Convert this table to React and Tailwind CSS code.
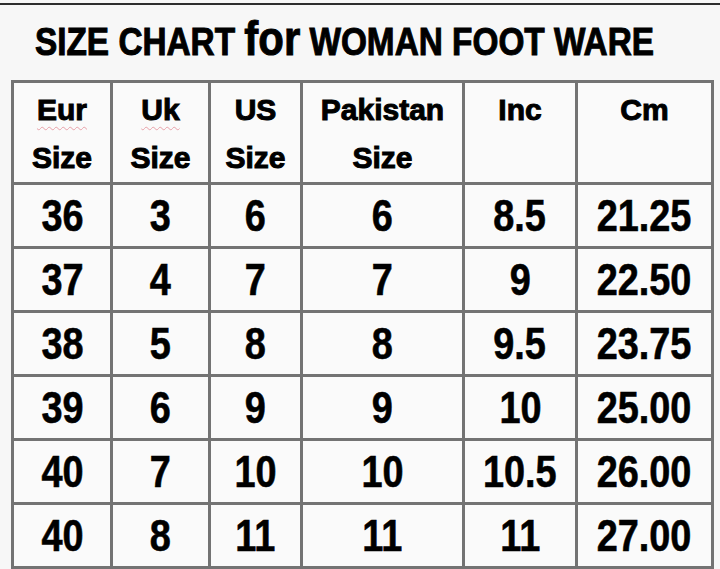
import React from "react";

const rows = [
  ["36", "3", "6", "6", "8.5", "21.25"],
  ["37", "4", "7", "7", "9", "22.50"],
  ["38", "5", "8", "8", "9.5", "23.75"],
  ["39", "6", "9", "9", "10", "25.00"],
  ["40", "7", "10", "10", "10.5", "26.00"],
  ["40", "8", "11", "11", "11", "27.00"],
];

const widths = [99, 98, 92, 162, 113, 136];

const App = () => {
  return (
    <div
      className="w-[720px] h-[569px] overflow-hidden bg-[#f7f7f7] text-black"
      style={{ fontFamily: '"Liberation Sans", Arial, sans-serif' }}
    >
      {/* top edge line */}
      <div className="h-[3px]" />
      <div className="h-[2px] bg-[#2e2e2e]" />

      {/* Title */}
      <div className="h-[75px] pl-[35px] pt-[7px] whitespace-nowrap">
        <span className="inline-block origin-left scale-x-[0.855] font-bold leading-[52px] text-[39px] [-webkit-text-stroke:1px_#000]">
          SIZE CHART <span className="text-[49px]">for</span> WOMAN FOOT WARE
        </span>
      </div>

      {/* Table */}
      <table className="ml-[11px] w-[700px] table-fixed border-collapse border-[3px] border-[#737373]">
        <colgroup>
          {widths.map((w, i) => (
            <col key={i} style={{ width: w }} />
          ))}
        </colgroup>
        <thead>
          <tr className="h-[102px] text-[30px] font-bold leading-[48px] [-webkit-text-stroke:1px_#000]">
            <th className="border-[3px] border-[#737373] bg-[#fafafa] align-top pt-[3px]">
              <span className="underline decoration-wavy decoration-[#e8a0a8] decoration-1 underline-offset-[6px]">Eur</span>
              <br />
              Size
            </th>
            <th className="border-[3px] border-[#737373] bg-[#fafafa] align-top pt-[3px]">
              <span className="underline decoration-wavy decoration-[#e8a0a8] decoration-1 underline-offset-[6px]">Uk</span>
              <br />
              Size
            </th>
            <th className="border-[3px] border-[#737373] bg-[#fafafa] align-top pt-[3px]">
              US
              <br />
              Size
            </th>
            <th className="border-[3px] border-[#737373] bg-[#fafafa] align-top pt-[3px]">
              Pakistan
              <br />
              Size
            </th>
            <th className="border-[3px] border-[#737373] bg-[#fafafa] align-top pt-[3px]">Inc</th>
            <th className="border-[3px] border-[#737373] bg-[#fafafa] align-top pt-[3px]">Cm</th>
          </tr>
        </thead>
        <tbody>
          {rows.map((r, i) => (
            <tr key={i} className="h-[64px]">
              {r.map((v, j) => (
                <td
                  key={j}
                  className="border-[3px] border-[#737373] bg-[#fafafa] p-0 text-center align-middle"
                >
                  <span className="inline-block scale-x-[0.86] text-[44px] font-bold leading-none [-webkit-text-stroke:0.6px_#000]">
                    {v}
                  </span>
                </td>
              ))}
            </tr>
          ))}
        </tbody>
      </table>
    </div>
  );
};

export default App;
